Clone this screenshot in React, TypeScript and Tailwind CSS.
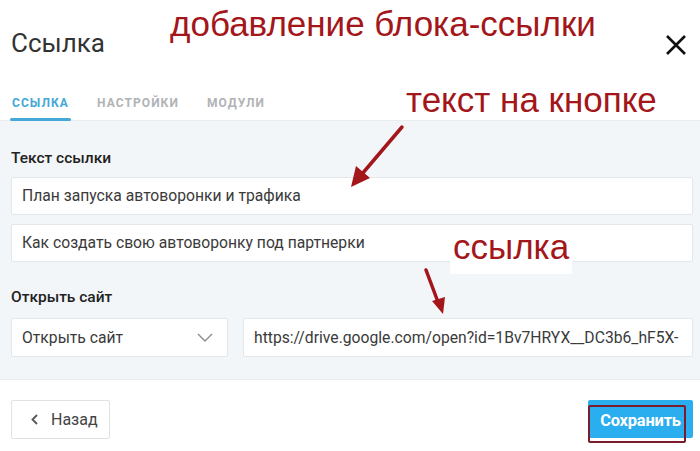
import * as React from 'react';

export default function App() {
  return (
    <div className="relative w-[700px] h-[451px] overflow-hidden bg-white font-['Roboto',sans-serif] text-[#333]">
      {/* header */}
      <div className="h-[86px] pt-[26px] pl-[11px] pr-[12px] flex justify-between">
        <h1 className="text-[26px] leading-[34px] text-[#333] font-normal">Ссылка</h1>
        <button className="mt-[7px] w-[24px] h-[24px] flex items-center justify-center text-[#111]">
          <CloseIcon />
        </button>
      </div>

      {/* tabs */}
      <div className="h-[34px] flex items-stretch gap-[24px] pl-[10px]">
        <div className="relative px-[2px] pt-[8px] text-[12px] font-bold tracking-[0.09em] text-[#45a8d6]">
          ССЫЛКА
          <span className="absolute left-0 right-0 bottom-[-1px] h-[3px] rounded-full bg-[#45a8d6]" />
        </div>
        <div className="px-[2px] pt-[8px] text-[12px] font-bold tracking-[0.09em] text-[#b0b3b6]">НАСТРОЙКИ</div>
        <div className="px-[2px] pt-[8px] text-[12px] font-bold tracking-[0.09em] text-[#b0b3b6]">МОДУЛИ</div>
      </div>

      {/* body */}
      <div className="border-t border-[#e8ecef] border-b bg-[#f3f6f8] pl-[11px] pr-[7px] pt-[27px] pb-[22px]">
        <div className="text-[15.5px] leading-[20px] font-medium text-[#222]">Текст ссылки</div>
        <div className="mt-[9px] h-[38px] flex items-center pl-[10px] bg-white border border-[#e3e7ea] rounded-[2px] text-[15.7px] text-[#3a3a3a]">
          План запуска автоворонки и трафика
        </div>
        <div className="mt-[9px] h-[38px] flex items-center pl-[10px] bg-white border border-[#e3e7ea] rounded-[2px] text-[15.7px] text-[#3a3a3a]">
          Как создать свою автоворонку под партнерки
        </div>

        <div className="mt-[25px] text-[15.5px] leading-[20px] font-medium text-[#222]">Открыть сайт</div>
        <div className="mt-[11px] flex gap-[15px]">
          <div className="w-[217px] h-[39px] flex items-center justify-between pl-[10px] pr-[14px] bg-white border border-[#e3e7ea] rounded-[2px] text-[15.7px] text-[#3a3a3a]">
            Открыть сайт
            <ChevronDown />
          </div>
          <div className="flex-1 h-[39px] flex items-center pl-[10px] bg-white border border-[#e3e7ea] rounded-[2px] text-[15.7px] text-[#3a3a3a] overflow-hidden whitespace-nowrap">
            https://drive.google.com/open?id=1Bv7HRYX__DC3b6_hF5X-
          </div>
        </div>
      </div>

      {/* footer */}
      <div className="flex justify-between items-start pl-[11px] pr-[7px] pt-[20px]">
        <button className="w-[99px] h-[39px] flex items-center gap-[13px] pl-[19px] bg-white border border-[#dfe3e6] rounded-[2px] text-[16px] text-[#444]">
          <ChevronLeft />
          Назад
        </button>
        <button className="relative w-[105px] h-[38px] bg-[#2aaef0] rounded-[2px] text-white text-[16.4px] font-bold tracking-[-0.01em]">
          <span className="relative top-[2px]">Сохранить</span>
          <span className="absolute left-0 top-[5px] w-[98px] h-[38px] border-2 border-[#7a1c2c] rounded-[2px]" />
        </button>
      </div>

      {/* annotations */}
      <div className="absolute left-[170px] top-[3px] text-[35px] leading-[42px] text-[#a3161a] font-['Liberation_Sans',Arial,sans-serif] whitespace-nowrap">
        добавление блока-ссылки
      </div>
      <div className="absolute left-[406px] top-[79px] text-[35px] leading-[42px] text-[#a3161a] font-['Liberation_Sans',Arial,sans-serif] whitespace-nowrap">
        текст на кнопке
      </div>
      <div className="absolute left-[450px] top-[226px] px-[3px] pb-[6px] bg-white text-[35px] leading-[42px] text-[#a3161a] font-['Liberation_Sans',Arial,sans-serif] whitespace-nowrap">
        ссылка
      </div>
      <svg className="absolute left-0 top-0 pointer-events-none" width="700" height="451" viewBox="0 0 700 451">
        <line x1="402" y1="127" x2="362" y2="174" stroke="#a3161a" strokeWidth="3.5" strokeLinecap="round" />
        <polygon points="351,187 356,166 370,178" fill="#a3161a" />
        <line x1="426" y1="270" x2="438" y2="302" stroke="#a3161a" strokeWidth="3.5" strokeLinecap="round" />
        <polygon points="443,314 432,301 445,297" fill="#a3161a" />
      </svg>
    </div>
  );
}

function CloseIcon() {
  return (
    <svg width="22" height="22" viewBox="0 0 22 22" fill="none" stroke="currentColor" strokeWidth="2.6">
      <path d="M2 2L20 20M20 2L2 20" />
    </svg>
  );
}

function ChevronDown() {
  return (
    <svg width="16" height="9" viewBox="0 0 16 9" fill="none" stroke="#8a8d90" strokeWidth="1.4">
      <path d="M1 1l7 7 7-7" />
    </svg>
  );
}

function ChevronLeft() {
  return (
    <svg width="7" height="11" viewBox="0 0 7 11" fill="none" stroke="#555" strokeWidth="1.8">
      <path d="M6 1L1.5 5.5 6 10" />
    </svg>
  );
}
